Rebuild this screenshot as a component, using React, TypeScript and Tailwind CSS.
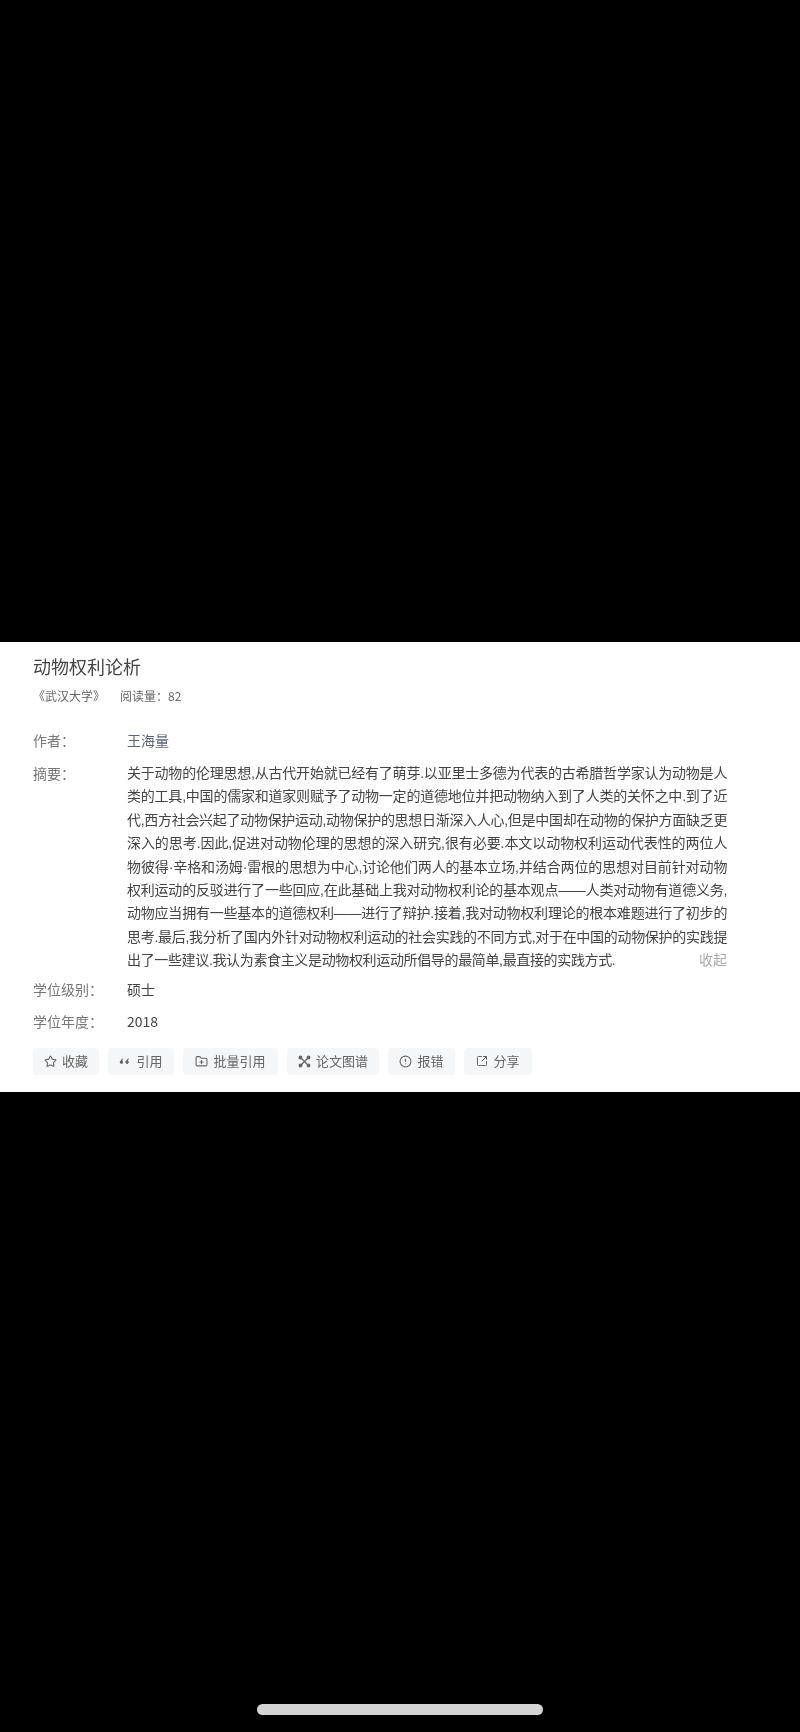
import { Star, FolderPlus, CircleAlert, SquareArrowOutUpRight } from "lucide-react";
import type { ReactNode } from "react";

const lines = [
  "关于动物的伦理思想,从古代开始就已经有了萌芽.以亚里士多德为代表的古希腊哲学家认为动物是人",
  "类的工具,中国的儒家和道家则赋予了动物一定的道德地位并把动物纳入到了人类的关怀之中.到了近",
  "代,西方社会兴起了动物保护运动,动物保护的思想日渐深入人心,但是中国却在动物的保护方面缺乏更",
  "深入的思考.因此,促进对动物伦理的思想的深入研究,很有必要.本文以动物权利运动代表性的两位人",
  "物彼得·辛格和汤姆·雷根的思想为中心,讨论他们两人的基本立场,并结合两位的思想对目前针对动物",
  "权利运动的反驳进行了一些回应,在此基础上我对动物权利论的基本观点——人类对动物有道德义务,",
  "动物应当拥有一些基本的道德权利——进行了辩护.接着,我对动物权利理论的根本难题进行了初步的",
  "思考.最后,我分析了国内外针对动物权利运动的社会实践的不同方式,对于在中国的动物保护的实践提",
];

function QuoteIcon() {
  return (
    <svg width="12" height="12" viewBox="0 0 12 12" fill="currentColor">
      <path d="M1 6.2 3.4 3.5h1L3.2 5.6a1.7 1.7 0 1 1-2.2.6zM6.6 6.2 9 3.5h1L8.8 5.6a1.7 1.7 0 1 1-2.2.6z" />
    </svg>
  );
}

function GraphIcon() {
  return (
    <svg width="13" height="13" viewBox="0 0 13 13" fill="none" stroke="currentColor" strokeWidth="1.3">
      <path d="M3 3l7 7M10 3 3 10" />
      <circle cx="2.5" cy="2.5" r="1.3" fill="currentColor" />
      <circle cx="10.5" cy="2.5" r="1.3" fill="currentColor" />
      <circle cx="2.5" cy="10.5" r="1.3" fill="currentColor" />
      <circle cx="10.5" cy="10.5" r="1.3" fill="currentColor" />
    </svg>
  );
}

function ActionButton({ icon, label, width }: { icon: ReactNode; label: string; width: string }) {
  return (
    <div className={`flex h-[27px] items-center justify-center gap-[5px] rounded-sm bg-[#f5f6f7] text-[13px] text-[#666] ${width}`}>
      {icon}
      <span>{label}</span>
    </div>
  );
}

export default function App() {
  return (
    <div className="flex h-[1732px] w-[800px] flex-col items-center bg-black font-['Noto_Sans_CJK_SC','Noto_Sans',sans-serif]">
      <div className="mt-[642px] h-[450px] w-full bg-white pl-[33px] pt-[11px] blur-[0.6px]">
        <h1 className="text-[18px] leading-[26px] font-normal text-[#444]">动物权利论析</h1>
        <div className="mt-[9px] flex gap-[15px] text-[12px] leading-[16px] text-[#666]">
          <span>《武汉大学》</span>
          <span>阅读量：82</span>
        </div>

        <div className="mt-[24px] flex text-[14px] leading-[24px]">
          <div className="w-[94px] text-[#777]">作者：</div>
          <div className="text-[#5a6678]">王海量</div>
        </div>

        <div className="mt-[10px] flex text-[14px] leading-[23.4px]">
          <div className="w-[94px] text-[#777]">摘要：</div>
          <div className="w-[600px] font-['Liberation_Sans','Noto_Sans_CJK_SC',sans-serif] text-[#444]">
            {lines.map((line) => (
              <div key={line} className="whitespace-nowrap tracking-[-0.4px] [text-align:justify] [text-align-last:justify]">
                {line}
              </div>
            ))}
            <div className="flex justify-between whitespace-nowrap">
              <span className="tracking-[-0.35px]">出了一些建议.我认为素食主义是动物权利运动所倡导的最简单,最直接的实践方式.</span>
              <span className="text-[#aaa]">收起</span>
            </div>
          </div>
        </div>

        <div className="mt-[4px] flex text-[14px] leading-[24px]">
          <div className="w-[94px] text-[#777]">学位级别：</div>
          <div className="text-[#444]">硕士</div>
        </div>
        <div className="mt-[8px] flex text-[14px] leading-[24px]">
          <div className="w-[94px] text-[#777]">学位年度：</div>
          <div className="text-[#444]">2018</div>
        </div>

        <div className="mt-[15px] flex gap-[9px]">
          <ActionButton width="w-[66px]" label="收藏" icon={<Star size={13} />} />
          <ActionButton width="w-[66px]" label="引用" icon={<QuoteIcon />} />
          <ActionButton width="w-[95px]" label="批量引用" icon={<FolderPlus size={13} />} />
          <ActionButton width="w-[92px]" label="论文图谱" icon={<GraphIcon />} />
          <ActionButton width="w-[67px]" label="报错" icon={<CircleAlert size={13} />} />
          <ActionButton width="w-[68px]" label="分享" icon={<SquareArrowOutUpRight size={12} />} />
        </div>
      </div>
      <div className="mt-[612px] h-[11px] w-[286px] rounded-full bg-[#d4d4d4]" />
    </div>
  );
}
